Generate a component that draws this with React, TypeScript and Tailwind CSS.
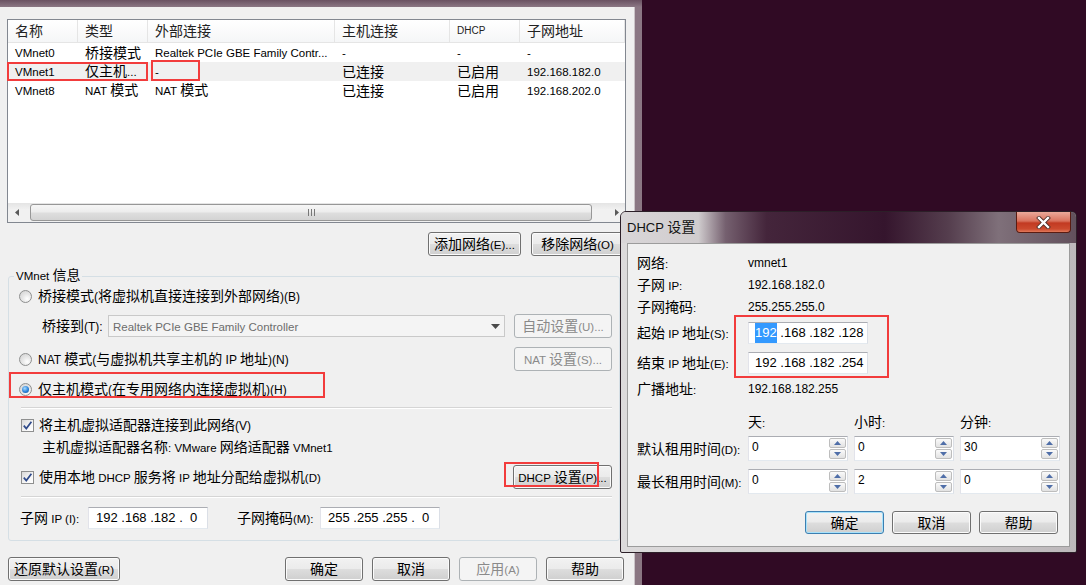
import React from "react";

const CJK_SPLIT = /([\u2E80-\u9FFF\uF900-\uFAFF\uFF00-\uFFEF\u3000-\u303F]+)/;
const isCJK = (s: string) => /[\u2E80-\u9FFF\uF900-\uFAFF\uFF00-\uFFEF\u3000-\u303F]/.test(s);

function Tx({ s, lat = "text-[11.5px]", cjk = "text-[14px]" }: { s: string; lat?: string; cjk?: string }) {
  const parts = s.split(CJK_SPLIT).filter((p) => p.length > 0);
  return (
    <span className="whitespace-pre leading-[16px]">
      {parts.map((p, i) => (
        <span key={i} className={isCJK(p) ? cjk : lat}>
          {p}
        </span>
      ))}
    </span>
  );
}

const BTN_GRAD = "bg-[linear-gradient(to_bottom,#f2f2f2_0%,#ebebeb_48%,#dddddd_52%,#cfcfcf_100%)]";

function Btn({ label, cls = "", disabled = false, focus = false }: { label: string; cls?: string; disabled?: boolean; focus?: boolean }) {
  const look = disabled
    ? "border-[#adb2b5] bg-[#f4f4f4] text-[#8a8a8a]"
    : focus
    ? "border-[#3c7fb1] shadow-[inset_0_0_0_1px_#a8e2fb] text-black " + BTN_GRAD
    : "border-[#707070] shadow-[inset_0_0_0_1px_#fbfbfb] text-black " + BTN_GRAD;
  return (
    <div className={"flex shrink-0 items-center justify-center rounded-[3px] border " + look + " " + cls}>
      <Tx s={label} />
    </div>
  );
}

function Radio({ checked = false }: { checked?: boolean }) {
  return (
    <span className="flex h-[13px] w-[13px] shrink-0 items-center justify-center rounded-full border border-[#8e8f8f] bg-[radial-gradient(circle_at_65%_70%,#ffffff_0%,#e6e6e6_45%,#cfcfcf_100%)]">
      {checked && (
        <span className="h-[7px] w-[7px] rounded-full bg-[radial-gradient(circle_at_40%_35%,#a8dcff_0%,#2b82d9_55%,#0d4a8c_100%)]" />
      )}
    </span>
  );
}

function Check() {
  return (
    <span className="flex h-[13px] w-[13px] shrink-0 items-center justify-center border border-[#8e8f8f] bg-[linear-gradient(135deg,#d8d8d8_0%,#f6f6f6_60%,#ffffff_100%)]">
      <svg width="11" height="11" viewBox="0 0 11 11">
        <path d="M1.8 5.6 L4.3 8.6 L9.4 1.8" stroke="#2f4a8a" strokeWidth="1.7" fill="none" />
      </svg>
    </span>
  );
}

const EDIT = "bg-white border border-t-[#abadb3] border-l-[#e2e3ea] border-r-[#dbdfe6] border-b-[#e3e9ef]";

function HScroll() {
  return (
    <div className="flex h-[19px] shrink-0 bg-[linear-gradient(to_bottom,#e4e4e4,#f1f1f1_35%,#f1f1f1)]">
      <div className="flex w-[21px] items-center justify-center pr-[4px]">
        <svg width="4" height="7" viewBox="0 0 4 7">
          <polygon points="4,0 0,3.5 4,7" fill="#5a5a5a" />
        </svg>
      </div>
      <div className="ml-[1px] mt-[1px] flex h-[17px] w-[562px] items-center justify-center rounded-[3px] border border-[#979797] bg-[linear-gradient(to_bottom,#f6f6f6_0%,#ececec_48%,#dedede_52%,#d3d3d3_100%)]">
        <div className="flex gap-[2px]">
          <span className="h-[7px] w-px bg-[#777]" />
          <span className="h-[7px] w-px bg-[#777]" />
          <span className="h-[7px] w-px bg-[#777]" />
        </div>
      </div>
      <div className="ml-auto flex w-[21px] items-center justify-center pl-[4px]">
        <svg width="4" height="7" viewBox="0 0 4 7">
          <polygon points="0,0 4,3.5 0,7" fill="#5a5a5a" />
        </svg>
      </div>
    </div>
  );
}

function MainWindow() {
  const colW = ["w-[70px]", "w-[70px]", "w-[187px]", "w-[115px]", "w-[70px]", "w-[105px]"];
  const heads = ["名称", "类型", "外部连接", "主机连接", "DHCP", "子网地址"];
  const rows = [
    ["VMnet0", "桥接模式", "Realtek PCIe GBE Family Contr...", "-", "-", "-"],
    ["VMnet1", "仅主机...", "-", "已连接", "已启用", "192.168.182.0"],
    ["VMnet8", "NAT 模式", "NAT 模式", "已连接", "已启用", "192.168.202.0"],
  ];
  return (
    <div className="h-[585px] w-[642px] bg-[linear-gradient(to_bottom,#6a5262_0px,#8b7784_7px,#8a7682_100%)] pr-[7px] pt-[7px]">
      <div className="flex h-full w-[635px] flex-col border-r border-[#cbc4c8] bg-[#f0f0f0]">
        {/* list view */}
        <div className="ml-[7px] mt-[12px] flex h-[204px] w-[619px] flex-col border border-[#828790] bg-white">
          <div className="flex h-[23px] shrink-0 border-b border-[#e5e5e5] bg-[linear-gradient(to_bottom,#ffffff,#f5f6f7)] text-[#222]">
            {heads.map((h, i) => (
              <div key={i} className={"flex items-center border-r border-[#e5e5e5] pl-[7px] " + colW[i]}>
                {h === "DHCP" ? <span className="text-[10px] leading-[16px]">DHCP</span> : <Tx s={h} />}
              </div>
            ))}
          </div>
          {rows.map((r, ri) => (
            <div key={ri} className={"flex h-[19px] shrink-0 " + (ri === 1 ? "bg-[#f0f0f0]" : "")}>
              {r.map((c, ci) => (
                <div key={ci} className={"flex items-center overflow-hidden pl-[7px] " + colW[ci]}>
                  <Tx s={c} />
                </div>
              ))}
            </div>
          ))}
          <div className="flex-1" />
          <HScroll />
        </div>

        {/* add / remove */}
        <div className="mt-[9px] flex h-[24px] justify-end gap-[10px] pr-[10px]">
          <Btn label="添加网络(E)..." cls="w-[93px]" />
          <Btn label="移除网络(O)" cls="w-[93px]" />
        </div>

        {/* group box */}
        <div className="relative ml-[8px] mt-[20px] flex h-[265px] w-[612px] flex-col rounded-[3px] border border-[#d5dfe5]">
          <div className="absolute -top-[14px] left-[5px] h-[16px] bg-[#f0f0f0] px-[2px]">
            <Tx s="VMnet 信息" />
          </div>

          <div className="mt-[9px] flex h-[20px] items-center gap-[6px] pl-[10px]">
            <Radio />
            <Tx s="桥接模式(将虚拟机直接连接到外部网络)(B)" lat="text-[12px]" />
          </div>

          <div className="mt-[8px] flex h-[24px] items-center pl-[33px]">
            <div className="w-[66px]">
              <Tx s="桥接到(T):" lat="text-[12px]" />
            </div>
            <div className="flex h-[22px] w-[397px] items-center border border-[#c9c9c9] bg-[#f4f4f4] pl-[4px] text-[#6d6d6d]">
              <Tx s="Realtek PCIe GBE Family Controller" />
              <svg className="ml-auto mr-[4px]" width="9" height="5" viewBox="0 0 9 5">
                <polygon points="0,0 9,0 4.5,5" fill="#4a4a4a" />
              </svg>
            </div>
            <Btn label="自动设置(U)..." disabled cls="ml-[9px] h-[24px] w-[98px]" />
          </div>

          <div className="mt-[9px] flex h-[24px] items-center gap-[6px] pl-[10px] pr-[7px]">
            <Radio />
            <Tx s="NAT 模式(与虚拟机共享主机的 IP 地址)(N)" lat="text-[12px]" />
            <Btn label="NAT 设置(S)..." disabled cls="ml-auto h-[24px] w-[98px]" />
          </div>

          <div className="mt-[8px] flex h-[20px] items-center gap-[6px] pl-[10px]">
            <Radio checked />
            <Tx s="仅主机模式(在专用网络内连接虚拟机)(H)" lat="text-[12px]" />
          </div>

          <div className="ml-[12px] mt-[8px] w-[591px] border-b border-t border-b-white border-t-[#d5d5d5]" />

          <div className="mt-[6px] flex h-[20px] items-center gap-[5px] pl-[12px]">
            <Check />
            <Tx s="将主机虚拟适配器连接到此网络(V)" lat="text-[12px]" />
          </div>

          <div className="mt-[2px] flex h-[20px] items-center pl-[33px]">
            <Tx s="主机虚拟适配器名称: VMware 网络适配器 VMnet1" />
          </div>

          <div className="mt-[8px] flex h-[24px] items-center gap-[5px] pl-[12px] pr-[7px]">
            <Check />
            <Tx s="使用本地 DHCP 服务将 IP 地址分配给虚拟机(D)" />
            <Btn label="DHCP 设置(P)..." cls="ml-auto h-[24px] w-[99px]" />
          </div>

          <div className="ml-[12px] mt-[7px] w-[591px] border-b border-t border-b-white border-t-[#d5d5d5]" />

          <div className="mt-[8px] flex h-[23px] items-center pl-[11px]">
            <div className="w-[68px]">
              <Tx s="子网 IP (I):" />
            </div>
            <div className={"flex h-[22px] w-[120px] items-center whitespace-pre pl-[7px] text-[13px] " + EDIT}>192 .168 .182 .  0</div>
            <div className="ml-[29px] w-[83px]">
              <Tx s="子网掩码(M):" />
            </div>
            <div className={"flex h-[22px] w-[120px] items-center whitespace-pre pl-[7px] text-[13px] " + EDIT}>255 .255 .255 .  0</div>
          </div>
        </div>

        {/* bottom buttons */}
        <div className="ml-[8px] mt-[16px] flex h-[24px]">
          <Btn label="还原默认设置(R)" cls="w-[112px]" />
          <div className="ml-[165px] flex gap-[9px]">
            <Btn label="确定" cls="w-[78px]" />
            <Btn label="取消" cls="w-[78px]" />
            <Btn label="应用(A)" disabled cls="w-[78px]" />
            <Btn label="帮助" cls="w-[78px]" />
          </div>
        </div>
      </div>
    </div>
  );
}

function Spin({ v }: { v: string }) {
  return (
    <div className={"flex h-[25px] w-[100px] " + EDIT}>
      <div className="flex-1 pl-[3px] pt-[2px] text-[12px] leading-[16px]">{v}</div>
      <div className="flex w-[19px] flex-col gap-px p-px">
        <div className="flex flex-1 items-center justify-center rounded-[2px] border border-[#bdbdbd] bg-[linear-gradient(to_bottom,#fafafa,#e2e2e2)]">
          <svg width="7" height="4" viewBox="0 0 7 4">
            <polygon points="3.5,0 7,4 0,4" fill="#4f6ea8" />
          </svg>
        </div>
        <div className="flex flex-1 items-center justify-center rounded-[2px] border border-[#bdbdbd] bg-[linear-gradient(to_bottom,#fafafa,#e2e2e2)]">
          <svg width="7" height="4" viewBox="0 0 7 4">
            <polygon points="0,0 7,0 3.5,4" fill="#4f6ea8" />
          </svg>
        </div>
      </div>
    </div>
  );
}

function InfoRow({ label, value, cls = "" }: { label: string; value: string; cls?: string }) {
  return (
    <div className={"flex h-[22px] items-center " + cls}>
      <div className="w-[111px]">
        <Tx s={label} />
      </div>
      <span className="text-[12px] leading-[16px]">{value}</span>
    </div>
  );
}

function DhcpDialog() {
  return (
    <div className="absolute left-[620px] top-[211px] flex h-[342px] w-[457px] flex-col rounded-b-[2px] rounded-t-[6px] border border-[#2c1f28] bg-[linear-gradient(to_right,#dcdadb,#cfcccd_60%,#bdb8bb)]">
      <div className="flex h-[31px] shrink-0 rounded-t-[5px] bg-[linear-gradient(to_right,#d9d6d8_0%,#d0ccce_17%,#75606f_23%,#44253b_32%,#35152d_58%,#553e4e_72%,#7f707a_83%,#62505c_100%)]">
        <div className="flex items-center pl-[6px] text-[#111]">
          <Tx s="DHCP 设置" lat="text-[13px]" />
        </div>
        <div className="ml-auto mr-[5px] flex h-[21px] w-[55px] items-center justify-center rounded-b-[4px] border border-t-0 border-[#5a1c12] bg-[linear-gradient(to_bottom,#eaa99a_0%,#d9725d_45%,#c23a22_55%,#cc4a2e_85%,#e07a5c_100%)]">
          <svg width="15" height="13" viewBox="0 0 15 13">
            <path d="M3 2 L12 11 M12 2 L3 11" stroke="#4a2a24" strokeWidth="4" strokeLinecap="square" />
            <path d="M3 2 L12 11 M12 2 L3 11" stroke="#ffffff" strokeWidth="2.4" strokeLinecap="square" />
          </svg>
        </div>
      </div>
      <div className="mx-[6px] mb-[5px] flex flex-1 flex-col border border-[#9c9c9c] bg-[#f0f0f0] pl-[9px]">
        <InfoRow label="网络:" value="vmnet1" cls="mt-[8px]" />
        <InfoRow label="子网 IP:" value="192.168.182.0" />
        <InfoRow label="子网掩码:" value="255.255.255.0" />

        <div className="mt-[4px] flex h-[22px] items-center">
          <div className="w-[111px]">
            <Tx s="起始 IP 地址(S):" />
          </div>
          <div className={"flex h-[22px] w-[120px] items-center whitespace-pre pl-[6px] text-[13px] " + EDIT}>
            <span className="bg-[#3399ff] text-white">192</span> .168 .182 .128
          </div>
        </div>
        <div className="mt-[8px] flex h-[22px] items-center">
          <div className="w-[111px]">
            <Tx s="结束 IP 地址(E):" />
          </div>
          <div className={"flex h-[22px] w-[120px] items-center whitespace-pre pl-[6px] text-[13px] " + EDIT}>192 .168 .182 .254</div>
        </div>
        <InfoRow label="广播地址:" value="192.168.182.255" cls="mt-[4px]" />

        <div className="mt-[12px] flex h-[20px] items-center">
          <div className="w-[111px]" />
          <div className="flex gap-[6px]">
            <div className="w-[100px]">
              <Tx s="天:" />
            </div>
            <div className="w-[100px]">
              <Tx s="小时:" />
            </div>
            <div className="w-[100px]">
              <Tx s="分钟:" />
            </div>
          </div>
        </div>

        <div className="mt-[4px] flex h-[25px] items-center">
          <div className="w-[111px]">
            <Tx s="默认租用时间(D):" />
          </div>
          <div className="flex gap-[6px]">
            <Spin v="0" />
            <Spin v="0" />
            <Spin v="30" />
          </div>
        </div>
        <div className="mt-[8px] flex h-[25px] items-center">
          <div className="w-[111px]">
            <Tx s="最长租用时间(M):" />
          </div>
          <div className="flex gap-[6px]">
            <Spin v="0" />
            <Spin v="2" />
            <Spin v="0" />
          </div>
        </div>

        <div className="mt-[17px] flex h-[23px] justify-end gap-[8px] pr-[11px]">
          <Btn label="确定" focus cls="w-[79px]" />
          <Btn label="取消" cls="w-[79px]" />
          <Btn label="帮助" cls="w-[79px]" />
        </div>
      </div>
    </div>
  );
}

export default function App() {
  return (
    <div className="relative h-[585px] w-[1086px] overflow-hidden bg-[#300a24] font-['Liberation_Sans','Noto_Sans_CJK_SC',sans-serif] text-black">
      <MainWindow />
      <DhcpDialog />
      {/* red annotation boxes */}
      <div className="absolute left-[7px] top-[62px] h-[19px] w-[141px] border-2 border-[#f23c3c]" />
      <div className="absolute left-[151px] top-[60px] h-[21px] w-[49px] border-2 border-[#f23c3c]" />
      <div className="absolute left-[9px] top-[372px] h-[26px] w-[316px] border-2 border-[#f23c3c]" />
      <div className="absolute left-[504px] top-[462px] h-[25px] w-[95px] border-2 border-[#f23c3c]" />
      <div className="absolute left-[734px] top-[315px] h-[63px] w-[155px] border-2 border-[#f23c3c]" />
    </div>
  );
}
